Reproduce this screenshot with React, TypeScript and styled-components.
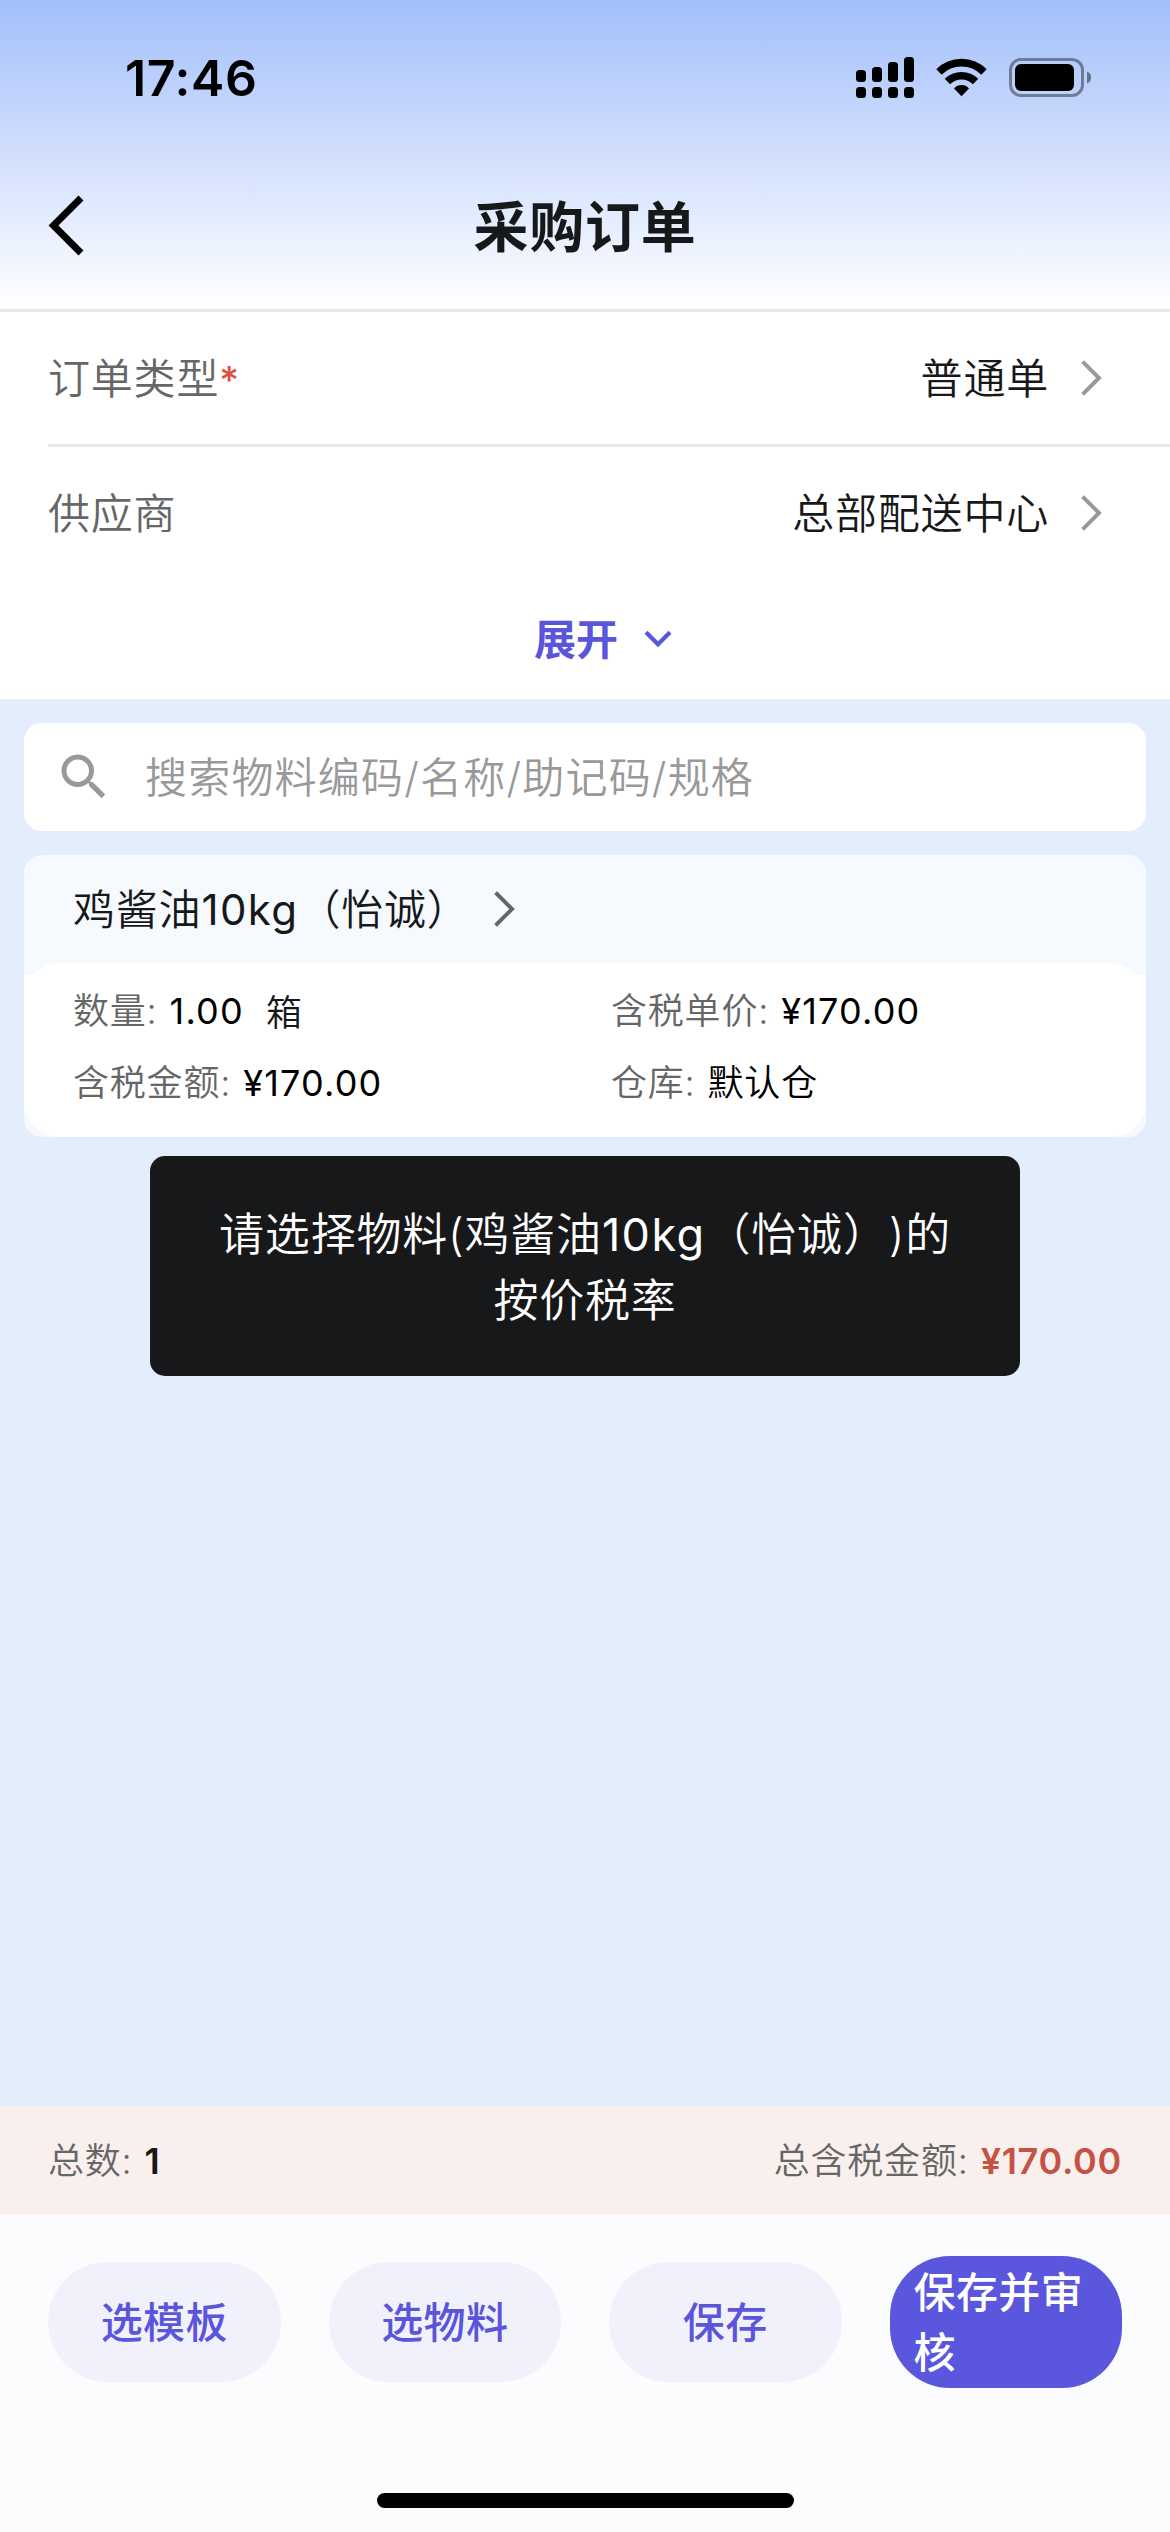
import React from "react";
import styled, { createGlobalStyle } from "styled-components";

const cjk = `"Noto Sans CJK SC", "Noto Sans CJK TC", sans-serif`;

const Global = createGlobalStyle`
  * { box-sizing: border-box; }
  body { margin: 0; background: #e3edfc; }
  svg { display: block; flex: none; }
`;

const Screen = styled.div`
  width: 1170px;
  height: 2532px;
  display: flex;
  flex-direction: column;
  background: #e3edfc;
  font-family: Inter, ${cjk};
  font-size: 42px;
  font-weight: 350;
  line-height: 60px;
  color: #17181a;
  overflow: hidden;
  white-space: nowrap;
  text-spacing-trim: space-all;
`;

const Header = styled.header`
  height: 312px;
  flex: none;
  border-bottom: 3px solid #e7e7e7;
  background: linear-gradient(#a3bffa, #ffffff);
`;

const StatusBar = styled.div`
  height: 141px;
  padding: 15px 76px 0 125px;
  display: flex;
  align-items: center;
  justify-content: space-between;
`;

const Time = styled.span`
  font-size: 50px;
  font-weight: 600;
  letter-spacing: 0.6px;
  color: #000;
`;

const StatusIcons = styled.div`
  display: flex;
  align-items: center;
`;

const NavBar = styled.div`
  height: 168px;
  display: grid;
  grid-template-columns: 200px 1fr 200px;
  align-items: center;
`;

const BackButton = styled.button`
  border: 0;
  background: none;
  padding: 0 0 0 42px;
`;

const Title = styled.h1`
  margin: 0;
  padding-top: 4px;
  text-align: center;
  font-size: 55px;
  font-weight: 600;
  line-height: 80px;
  letter-spacing: 0.8px;
`;

const Form = styled.section`
  background: #fff;
  flex: none;
`;

const Field = styled.div<{ $line?: boolean }>`
  margin-left: 48px;
  height: ${(p) => (p.$line ? 135 : 132)}px;
  border-bottom: ${(p) => (p.$line ? "3px solid #e7e7e7" : "0")};
  padding-right: 68px;
  display: flex;
  align-items: center;
  letter-spacing: 0.8px;
`;

const Label = styled.span`
  padding-top: 2px;
`;

const FieldLabel = styled(Label)`
  flex: 1;
  color: #666;
`;

const Required = styled.span`
  font-size: 38px;
  font-weight: 500;
  color: #d9523f;
`;

const FieldValue = styled(Label)`
  margin-right: 32px;
`;

const Expand = styled.button`
  width: 100%;
  height: 120px;
  border: 0;
  padding: 0 0 0 36px;
  background: none;
  display: flex;
  align-items: center;
  justify-content: center;
  gap: 26px;
  font: inherit;
  font-weight: 600;
  color: #5a55db;
`;

const Main = styled.main`
  flex: 1;
  padding: 24px;
  display: flex;
  flex-direction: column;
  gap: 24px;
`;

const Search = styled.div`
  height: 108px;
  border-radius: 18px;
  background: #fff;
  display: flex;
  align-items: center;
  padding-left: 30px;
  gap: 31px;
  color: #999;
  letter-spacing: 1.2px;
`;

const Card = styled.article`
  height: 282px;
  border-radius: 18px;
  overflow: hidden;
  background: linear-gradient(#f6fafe 120px, #ffffff 120px, #ffffff 240px, #f6fafe 264px);
`;

const CardHead = styled.div`
  height: 108px;
  padding-left: 49px;
  display: flex;
  align-items: center;
  gap: 24px;
  letter-spacing: 0.8px;
`;

const Latin = styled.span`
  font-weight: 400;
  letter-spacing: 1.4px;
`;

const CardBody = styled.div`
  height: 174px;
  border-radius: 36px;
  background: #fff;
  padding: 12px 0 0 49px;
  display: grid;
  grid-template-columns: 538px 1fr;
  grid-auto-rows: 72px;
  align-items: center;
  font-size: 36px;
  letter-spacing: 0.8px;
`;

const Entry = styled.div`
  display: flex;
  align-items: center;
  color: #666;
`;

const Figure = styled.span<{ $text?: boolean }>`
  margin-left: 12px;
  font-weight: ${(p) => (p.$text ? 350 : 400)};
  letter-spacing: ${(p) => (p.$text ? 0.8 : 1.2)}px;
  color: #000;
`;

const Unit = styled.span`
  margin-left: 22px;
  padding-top: 4px;
  color: #17181a;
`;

const Toast = styled.div`
  position: absolute;
  left: 150px;
  top: 1156px;
  width: 870px;
  height: 220px;
  padding-top: 4px;
  border-radius: 15px;
  background: #17181a;
  color: #fff;
  display: flex;
  flex-direction: column;
  align-items: center;
  justify-content: center;
  font-size: 45px;
  line-height: 66px;
  letter-spacing: 0.8px;
  text-align: center;
`;

const Totals = styled.div`
  height: 108px;
  flex: none;
  padding: 2px 48px 0;
  background: #f9f0ee;
  display: flex;
  align-items: center;
  justify-content: space-between;
  font-size: 36px;
  letter-spacing: 0.8px;
  color: #666;
`;

const Strong = styled.span<{ $tone: string }>`
  margin-left: 12px;
  font-weight: 560;
  letter-spacing: 0.7px;
  color: ${(p) => p.$tone};
`;

const Footer = styled.footer`
  height: 318px;
  flex: none;
  background: #fbfcfe;
  display: flex;
  flex-direction: column;
  align-items: center;
  justify-content: space-between;
  padding: 42px 48px 24px;
`;

const Actions = styled.div`
  width: 100%;
  display: grid;
  grid-template-columns: repeat(4, 1fr);
  gap: 48px;
  align-items: center;
`;

const Action = styled.button<{ $primary?: boolean }>`
  height: ${(p) => (p.$primary ? 132 : 120)}px;
  border: 0;
  border-radius: 60px;
  padding: 2px 24px 0;
  background: ${(p) => (p.$primary ? "#5a56dd" : "#f1f1fc")};
  color: ${(p) => (p.$primary ? "#fff" : "#5a55db")};
  font: inherit;
  font-weight: 500;
  letter-spacing: 0.4px;
  text-align: ${(p) => (p.$primary ? "left" : "center")};
  white-space: ${(p) => (p.$primary ? "normal" : "nowrap")};
`;

const HomeIndicator = styled.div`
  width: 417px;
  height: 15px;
  border-radius: 8px;
  background: #000;
`;

const ChevronRight = ({ color = "#999" }: { color?: string }) => (
  <svg width="21" height="36" viewBox="0 0 21 36" fill="none" stroke={color} strokeWidth="4">
    <path d="M1.6 1.6 18 18 1.6 34.4" />
  </svg>
);

const ChevronDown = () => (
  <svg width="28" height="18" viewBox="0 0 28 18" fill="none" stroke="#5a55db" strokeWidth="4.2">
    <path d="M2 2.2 14 14.2 26 2.2" />
  </svg>
);

const BackIcon = () => (
  <svg width="44" height="64" viewBox="0 0 44 64" fill="none" stroke="#000" strokeWidth="7">
    <path d="M39 5 11.500 32.500 39 60" />
  </svg>
);

const SearchIcon = () => (
  <svg width="60" height="60" viewBox="0 0 24 24" fill="#999">
    <path d="M15.5 14h-.79l-.28-.27C15.41 12.59 16 11.11 16 9.5 16 5.91 13.09 3 9.5 3S3 5.91 3 9.5 5.91 16 9.5 16c1.61 0 3.09-.59 4.23-1.57l.27.28v.79l5 4.99L20.49 19l-4.99-5zm-6 0C7.01 14 5 11.99 5 9.5S7.01 5 9.5 5 14 7.01 14 9.5 11.99 14 9.5 14z" />
  </svg>
);

const StatusGlyphs = () => (
  <svg width="238" height="46" viewBox="0 0 238 46">
    {[0, 1, 2, 3].map((i) => {
      const top = [15, 12, 7, 2][i];
      return (
        <g key={i}>
          <rect x={i * 16} y={top} width="10" height={27 - top} rx="3.5" />
          <rect x={i * 16} y="32" width="10" height="11" rx="3.5" />
        </g>
      );
    })}
    <g fill="none" stroke="#000" strokeWidth="7.6">
      <path d="M83 17a31.600 31.600 0 0 1 45 0" />
      <path d="M91.400 26.500a20 20 0 0 1 28.200 0" />
    </g>
    <path d="M105.500 41.200 98 33.400a10 10 0 0 1 15 0z" />
    <rect x="154.5" y="4.5" width="72" height="36" rx="10.5" fill="none" stroke="#000" strokeOpacity="0.4" strokeWidth="3" />
    <rect x="159" y="9" width="59" height="27" rx="6" />
    <path d="M231 16.5c5.500 1.600 5.500 10.400 0 12z" fillOpacity="0.45" />
  </svg>
);

export default function App() {
  return (
    <Screen>
      <Global />
      <Header>
        <StatusBar>
          <Time>17:46</Time>
          <StatusIcons>
            <StatusGlyphs />
          </StatusIcons>
        </StatusBar>
        <NavBar>
          <BackButton aria-label="返回">
            <BackIcon />
          </BackButton>
          <Title>采购订单</Title>
        </NavBar>
      </Header>
      <Form>
        <Field $line>
          <FieldLabel>
            订单类型<Required>*</Required>
          </FieldLabel>
          <FieldValue>普通单</FieldValue>
          <ChevronRight />
        </Field>
        <Field>
          <FieldLabel>供应商</FieldLabel>
          <FieldValue>总部配送中心</FieldValue>
          <ChevronRight />
        </Field>
        <Expand>
          <Label>展开</Label>
          <ChevronDown />
        </Expand>
      </Form>
      <Main>
        <Search>
          <SearchIcon />
          <Label>搜索物料编码/名称/助记码/规格</Label>
        </Search>
        <Card>
          <CardHead>
            <Label>
              鸡酱油<Latin>10kg</Latin>（怡诚）
            </Label>
            <ChevronRight color="#666" />
          </CardHead>
          <CardBody>
            <Entry>
              数量:<Figure>1.00</Figure>
              <Unit>箱</Unit>
            </Entry>
            <Entry>
              含税单价:<Figure>¥170.00</Figure>
            </Entry>
            <Entry>
              含税金额:<Figure>¥170.00</Figure>
            </Entry>
            <Entry>
              仓库:<Figure $text>默认仓</Figure>
            </Entry>
          </CardBody>
        </Card>
      </Main>
      <Toast>
        <span>
          请选择物料(鸡酱油<Latin>10kg</Latin>（怡诚）)的
        </span>
        <span>按价税率</span>
      </Toast>
      <Totals>
        <span>
          总数:<Strong $tone="#17181a">1</Strong>
        </span>
        <span>
          总含税金额:<Strong $tone="#c45245">¥170.00</Strong>
        </span>
      </Totals>
      <Footer>
        <Actions>
          <Action>选模板</Action>
          <Action>选物料</Action>
          <Action>保存</Action>
          <Action $primary>保存并审核</Action>
        </Actions>
        <HomeIndicator />
      </Footer>
    </Screen>
  );
}
